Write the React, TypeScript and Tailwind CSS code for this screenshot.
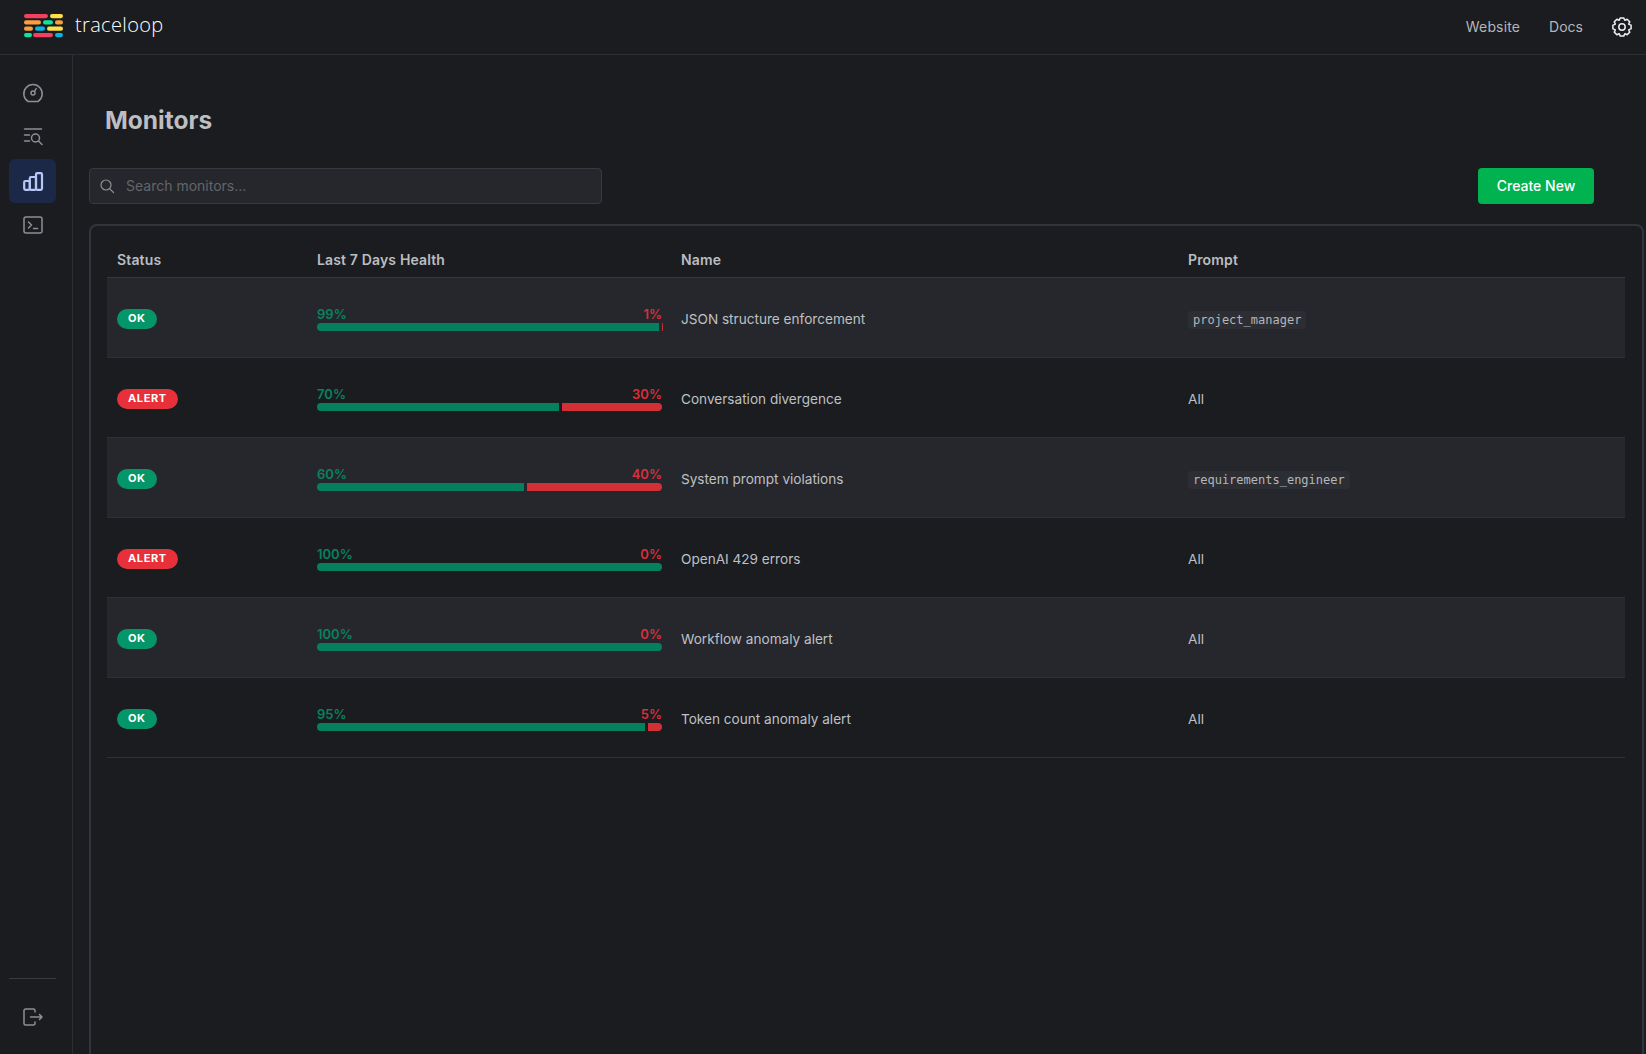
import React from "react";

const rows = [
  { s: "OK", g: 99, r: 1, n: "JSON structure enforcement", p: "project_manager", code: true },
  { s: "ALERT", g: 70, r: 30, n: "Conversation divergence", p: "All" },
  { s: "OK", g: 60, r: 40, n: "System prompt violations", p: "requirements_engineer", code: true },
  { s: "ALERT", g: 100, r: 0, n: "OpenAI 429 errors", p: "All" },
  { s: "OK", g: 100, r: 0, n: "Workflow anomaly alert", p: "All" },
  { s: "OK", g: 95, r: 5, n: "Token count anomaly alert", p: "All" },
];

function Logo() {
  const bars: [number, number, number, string][] = [
    [0, 0, 24, "#f43f5e"], [26, 0, 13, "#fde047"],
    [0, 6.3, 17, "#fb9f3c"], [19, 6.3, 10, "#10e39a"], [31, 6.3, 8, "#fb9f3c"],
    [0, 12.6, 9, "#fb9f3c"], [11, 12.6, 10, "#06b6e4"], [23, 12.6, 16, "#fde047"],
    [0, 19, 8, "#10e39a"], [9, 19, 20, "#f43f5e"], [31, 19, 8, "#06b6e4"],
  ];
  return (
    <svg width="39" height="24" viewBox="0 0 39 24" className="mb-[2px]">
      {bars.map(([x, y, w, c], i) => (
        <rect key={i} x={x} y={y} width={w} height="4.2" rx="2.1" fill={c} />
      ))}
    </svg>
  );
}

const stroke = { fill: "none", stroke: "currentColor", strokeWidth: 1.5, strokeLinecap: "round", strokeLinejoin: "round" } as const;

function Gauge() {
  return (
    <svg width="24" height="24" viewBox="0 0 24 24" {...stroke}>
      <path d="M7 20.5h10a9.2 9.2 0 1 0-10 0z" />
      <circle cx="12" cy="12" r="2" />
      <path d="M13.5 10.5L15.2 7.5" />
    </svg>
  );
}
function ListSearch() {
  return (
    <svg width="24" height="24" viewBox="0 0 24 24" {...stroke}>
      <path d="M3.5 4h17M3.5 10h5M3.5 16h5" />
      <circle cx="14.5" cy="13" r="4" />
      <path d="M17.5 16l3.5 3.5" />
    </svg>
  );
}
function Bars() {
  return (
    <svg width="24" height="24" viewBox="0 0 24 24" {...stroke} strokeWidth={2.2}>
      <rect x="3.2" y="12" width="5.6" height="8.8" rx="1.2" />
      <rect x="8.8" y="8" width="6.2" height="12.8" rx="1.2" />
      <rect x="15" y="4.2" width="6" height="16.6" rx="1.2" />
    </svg>
  );
}
function Terminal() {
  return (
    <svg width="24" height="24" viewBox="0 0 24 24" {...stroke}>
      <rect x="3" y="4" width="18" height="16" rx="2" />
      <path d="M7.5 9l3 3-3 3M12.5 15.5h4" />
    </svg>
  );
}
function Logout() {
  return (
    <svg width="24" height="24" viewBox="0 0 24 24" {...stroke}>
      <path d="M14 7V5.5A1.5 1.5 0 0 0 12.5 4h-8A1.5 1.5 0 0 0 3 5.5v13A1.5 1.5 0 0 0 4.5 20h8a1.5 1.5 0 0 0 1.5-1.5V17" />
      <path d="M9.5 12H21M18.5 9.5L21 12l-2.5 2.5" />
    </svg>
  );
}
function SearchIcon() {
  return (
    <svg width="16" height="16" viewBox="0 0 16 16" fill="none" stroke="currentColor" strokeWidth="1.2" strokeLinecap="round">
      <circle cx="7" cy="7" r="5" />
      <path d="M10.8 10.8L14.5 14.5" />
    </svg>
  );
}
function Gear() {
  let d = "";
  for (let i = 0; i < 8; i++) {
    const a = (i * Math.PI) / 4;
    const pts = [
      [7.4, a - 0.36],
      [9.3, a - 0.2],
      [9.3, a + 0.2],
      [7.4, a + 0.36],
    ];
    for (const [r, t] of pts) {
      d += `${d ? "L" : "M"}${(11 + r * Math.cos(t)).toFixed(2)} ${(11 + r * Math.sin(t)).toFixed(2)}`;
    }
  }
  return (
    <svg width="22" height="22" viewBox="0 0 22 22" {...stroke}>
      <path d={d + "z"} />
      <circle cx="11" cy="11" r="3.2" />
    </svg>
  );
}

export default function App() {
  return (
    <div className="h-screen overflow-hidden flex flex-col bg-[#1a1c20] text-[#bfc0c4] font-['Inter',sans-serif] text-sm">
      <header className="h-[55px] shrink-0 flex items-center border-b border-[#2c2e33] pl-6 pr-[13px]">
        <Logo />
        <span className="ml-3 mb-[3px] text-[20px] font-light tracking-[0.35px] text-white font-['Open_Sans',sans-serif]">traceloop</span>
        <nav className="ml-auto flex items-center">
          <a className="text-[#b5b6ba] tracking-[0.15px]">Website</a>
          <a className="ml-[29px] text-[#b5b6ba]">Docs</a>
          <span className="ml-[28px] text-[#eceded]"><Gear /></span>
        </nav>
      </header>
      <div className="flex-1 min-h-0 flex">
        <aside className="w-[73px] shrink-0 border-r border-[#2c2e33] flex flex-col items-start pl-[9px] pt-[16px] pb-[25px] text-[#8e8f94]">
          <div className="w-[47px] h-[44px] flex items-center justify-center"><Gauge /></div>
          <div className="w-[47px] h-[44px] flex items-center justify-center"><ListSearch /></div>
          <div className="w-[47px] h-[44px] flex items-center justify-center rounded-md bg-[#1c2848] text-[#b9c7f6]"><Bars /></div>
          <div className="w-[47px] h-[44px] flex items-center justify-center"><Terminal /></div>
          <div className="mt-auto w-[47px] border-t border-[#3a3c41] pt-[26px] flex justify-center"><Logout /></div>
        </aside>
        <main className="flex-1 min-w-0 pl-4 pr-[2px] flex flex-col">
          <h1 className="mt-[49px] ml-[16px] text-[24.5px] font-bold text-[#bdbec2] leading-8">Monitors</h1>
          <div className="mt-[32px] flex items-center justify-between pr-[50px]">
            <div className="w-[513px] h-9 flex items-center rounded border border-[#37393e] bg-[#26272c] pl-[9px] text-[#8e8f94]">
              <SearchIcon />
              <span className="ml-[11px] text-[#63656a]">Search monitors...</span>
            </div>
            <button className="w-[116px] h-9 rounded bg-[#00b350] text-white font-medium">Create New</button>
          </div>
          <div className="mt-[20px] flex-1 border-2 border-b-0 border-[#31353b] rounded-t-lg pl-[16px] pr-[17px] pt-[1px]">
            <div className="grid grid-cols-[200px_364px_507px_1fr] h-[51px] items-end pb-[7px] pl-[10px] font-semibold tracking-[0.15px] text-[#bcbdc1] border-b border-[#35373c]">
              <div>Status</div>
              <div>Last 7 Days Health</div>
              <div>Name</div>
              <div>Prompt</div>
            </div>
            {rows.map((r, i) => (
              <div key={r.n} className={`grid grid-cols-[200px_364px_507px_1fr] h-[80px] items-center pl-[10px] border-b border-[#2e3035] ${i % 2 === 0 ? "bg-[#26272c]" : ""}`}>
                <div className="pt-[1px]">
                  <span className={`inline-flex items-center h-5 rounded-full px-[11px] text-[11px] font-bold tracking-[0.6px] text-white ${r.s === "OK" ? "bg-[#049669]" : "bg-[#e7303a]"}`}>{r.s}</span>
                </div>
                <div className="w-[345px] pt-[2px]">
                  <div className="flex justify-between text-[13px] leading-[14px] font-semibold">
                    <span className="text-[#07825f]">{r.g}%</span>
                    <span className="text-[#dc2e3a]">{r.r}%</span>
                  </div>
                  <div className="mt-[2px] h-2 flex">
                    <div className={`bg-[#05805f] shrink-0 ${r.r > 0 ? "rounded-l" : "rounded"}`} style={{ width: `${r.g}%` }} />
                    {r.r > 0 && <div className="bg-[#d32f36] shrink-0 ml-[3px] rounded-r" style={{ width: `calc(${r.r}% - 3px)` }} />}
                  </div>
                </div>
                <div className="text-[13.6px] pt-[4px]">{r.n}</div>
                <div className="text-[13.6px] pt-[4px]">
                  {r.code ? (
                    <code className="inline-block rounded bg-[#2d2e33] px-[5px] h-[18px] leading-[18px] text-xs font-['DejaVu_Sans_Mono',monospace] text-[#b5b6ba]">{r.p}</code>
                  ) : r.p}
                </div>
              </div>
            ))}
          </div>
        </main>
      </div>
    </div>
  );
}
